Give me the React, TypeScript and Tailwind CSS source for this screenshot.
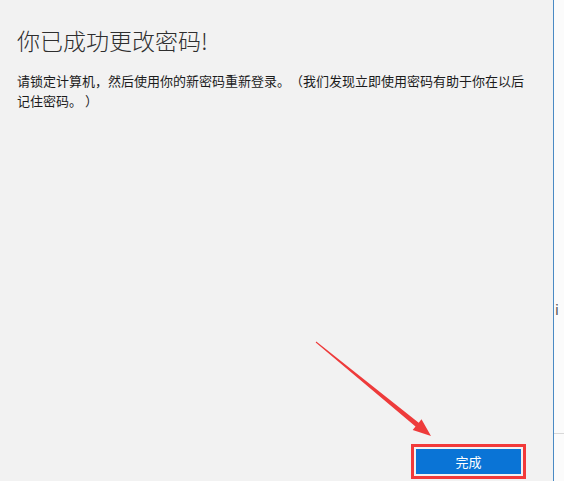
export default function App() {
  return (
    <div
      className="relative flex h-[481px] w-[564px] overflow-hidden bg-[#f2f2f2]"
      style={{ fontFamily: '"Noto Sans CJK SC", "Noto Sans", sans-serif' }}
    >
      {/* main dialog panel */}
      <div className="flex h-full w-[554px] flex-col border-r border-r-[#4a8ac4]">
        <div className="pl-[17px] pr-[14px] pt-[24px]">
          <h1 className="text-[23px] font-light leading-[32px] text-[#2e2e2e]">你已成功更改密码!</h1>
          <p className="mt-[15px] whitespace-nowrap text-[13px] leading-[20px] text-[#1c1c1c] [text-spacing-trim:space-all]">
            请锁定计算机，然后使用你的新密码重新登录。（我们发现立即使用密码有助于你在以后
            <br />
            记住密码。 ）
          </p>
        </div>
        <div className="flex-1" />
        <div className="mb-[2px] mr-[27px] flex justify-end">
          <div className="border-[3px] border-[#f23a3a] p-[2px]">
            <button className="flex h-[25px] w-[105px] items-center justify-center bg-[#0a74d6] text-[13px] text-white">
              完成
            </button>
          </div>
        </div>
      </div>

      {/* background window strip on the right */}
      <div className="relative flex-1 bg-[#fbfbfb]">
        <span className="absolute left-[1px] top-[302px] text-[14px] leading-none text-[#555]">i</span>
        <div className="absolute left-0 right-0 top-[433px] h-px bg-[#d8d8d8]" />
      </div>

      {/* red annotation arrow */}
      <svg className="pointer-events-none absolute left-0 top-0" width="564" height="481">
        <polygon
          points="316.3,341.6 418.7,422.7 421.5,419.2 431,436 412.7,430 415.5,426.5 315.7,342.4"
          fill="#ee3b3b"
        />
      </svg>
    </div>
  );
}
